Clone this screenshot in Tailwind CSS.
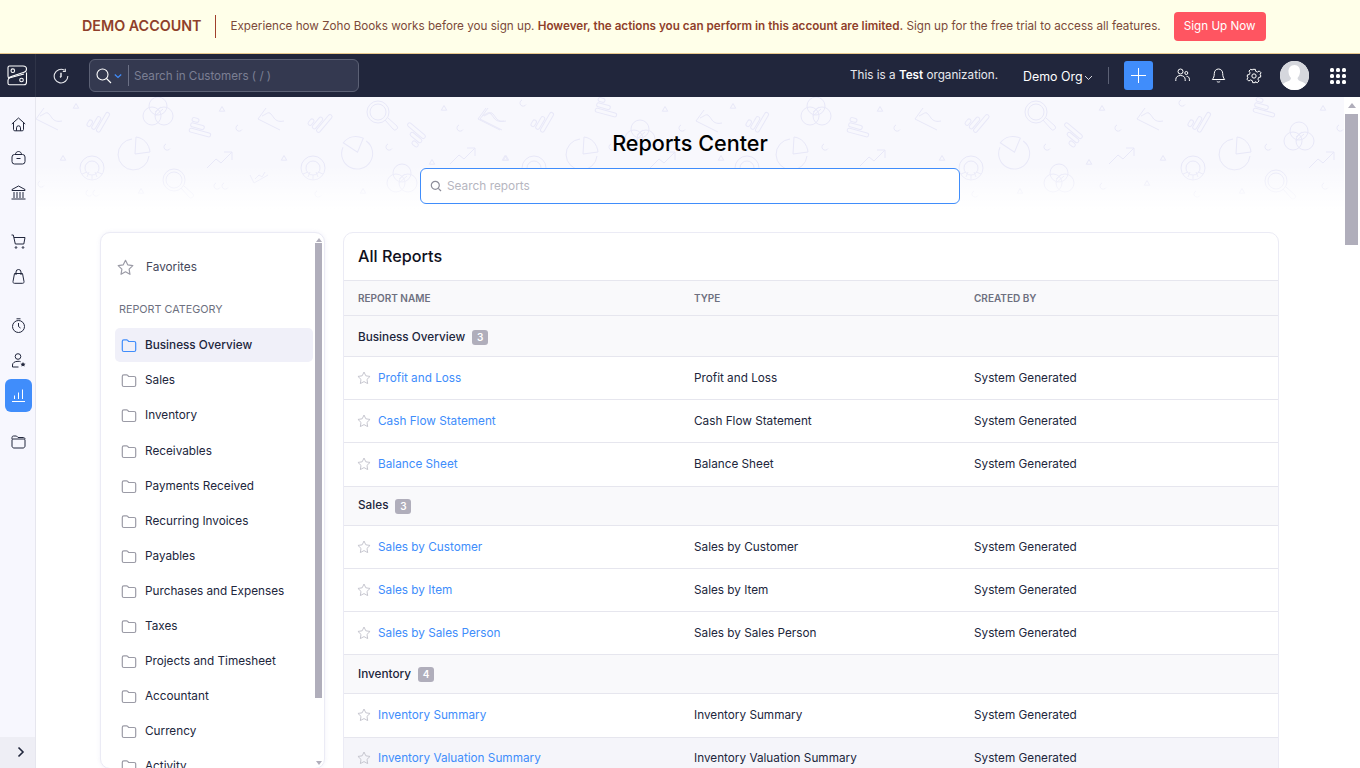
<!DOCTYPE html>
<html>
<head>
<meta charset="utf-8">
<script src="https://cdn.jsdelivr.net/npm/@tailwindcss/browser@4"></script>
</head>
<body class="h-[768px] w-[1360px] overflow-hidden bg-white font-['Inter',sans-serif] text-[11.75px] text-[#21263c]">
<svg class="hidden">
<defs>
<symbol id="star" viewBox="0 0 16 16"><path d="M8 1.200l2.100 4.300 4.800.7-3.500 3.400.8 4.800L8 12.100l-4.200 2.300.8-4.800L1.100 6.200l4.800-.7z" fill="none" stroke="currentColor" stroke-width="1.100" stroke-linejoin="round"/></symbol>
<symbol id="folder" viewBox="0 0 16 16"><path d="M1.300 3.400c0-.9.700-1.500 1.500-1.500h2.900c.4 0 .7.200 1 .5l.9 1.100h5.600c.9 0 1.500.7 1.500 1.500v7c0 .9-.6 1.500-1.500 1.500H2.800c-.8 0-1.500-.6-1.500-1.500z" fill="none" stroke="currentColor" stroke-width="1.200"/></symbol>
<g id="p-line"><path d="M-5-11L-13 0 9 11"/><path d="M-9-3c5-2 6-5 9-2 3 3 4 9 13 7"/></g>
<g id="p-bars"><rect x="-2" y="-13" width="4" height="22" rx="2" transform="rotate(30)"/><rect x="-7.500" y="-5" width="4" height="14" rx="2" transform="rotate(30)"/><rect x="-13" y="2" width="4" height="7" rx="2" transform="rotate(30)"/></g>
<g id="p-venn"><circle cy="-6" r="9"/><circle cx="-6" cy="4" r="9"/><circle cx="6" cy="4" r="9"/><path d="M-3 0l6-5M-3 4l8-7"/></g>
<g id="p-pie"><path d="M-2-15a15.500 15.500 0 1 0 17 17"/><path d="M2-17c8 1 13 7 14 15L1 0z"/></g>
<g id="p-donut"><circle r="12"/><circle r="7"/><path d="M-5 9l2-5M5 9l-2-5M0 12V7M-10 6l5-2M10 6l-5-2"/></g>
<g id="p-mag"><circle r="11"/><circle r="8"/><path d="M7 8l8 9a2.500 2.500 0 0 0 4-3l-9-8"/></g>
<g id="p-arrow"><path d="M-13 6l9-9 5 4 11-11M4-10h8v8"/></g>
<g id="p-tri"><path d="M0-2.500L2.700 2.200H-2.700z"/></g>
<g id="p-c"><path d="M-1-3a3.200 3.200 0 1 0 4 4.500"/></g>
<g id="p-mini"><path d="M-9-2l4 8 14-8M-4 2l4-4 3 2 3-5"/></g>
</defs>
</svg>

<!-- Demo banner -->
<div class="flex h-[54px] items-center border-b border-[#e9c98f] bg-[#ffffe9] pl-[82px]">
  <span class="text-[14.300px] font-semibold leading-none text-[#8f3f2b]">DEMO ACCOUNT</span>
  <span class="mx-[14px] h-[23px] w-px bg-[#a0402c]"></span>
  <p class="whitespace-nowrap text-[11.680px] text-[#7c4a3a]">Experience how Zoho Books works before you sign up. <b class="font-semibold text-[#8f3f2b]">However, the actions you can perform in this account are limited.</b> Sign up for the free trial to access all features.</p>
  <button class="ml-[13px] flex h-[29px] w-[92px] items-center justify-center rounded-[4px] bg-[#ff5561] text-[11.650px] text-white">Sign Up Now</button>
</div>

<!-- Top bar -->
<header class="flex h-[43px] items-center bg-[#21263c] text-white">
  <div class="flex h-full w-[36px] items-center justify-center border-r border-[#2f3448]">
    <svg class="h-[23px] w-[23px]" viewBox="0 0 23 23" fill="none" stroke="#fff" stroke-width="1.100"><path d="M2 3.500C2 2.500 2.600 2 3.500 2H17c2 0 3.500 1 3.500 3s-1 2.800-2.500 3.300L6 12.300c-1.500.5-3 1.200-3.200 1.800C2.300 13.800 2 13 2 12z"/><path d="M20.500 8.500V18c0 1.700-1 2.800-2.500 2.800H3.500c-1 0-1.500-.6-1.500-1.500v-3c0-1.200.6-2 2-2.500L18 10"/><circle cx="6.800" cy="6.700" r="1.800"/><circle cx="15.500" cy="16" r="1.800"/></svg>
  </div>
  <div class="flex w-[49px] justify-center">
    <svg class="h-[16px] w-[16px]" viewBox="0 0 16 16" fill="none" stroke="#e8e9ee" stroke-width="1.100"><path d="M11.500 2.300A6.800 6.800 0 1 0 14.800 8"/><path d="M12.300.8v2.700H9.800" /><path d="M8 4.800V8.500l-1 .8" stroke-width="1.500"/></svg>
  </div>
  <div class="ml-[4px] flex h-[33px] w-[270px] items-center rounded-[6px] border border-[#5c6175] bg-[#343950]">
    <svg class="ml-[6px] h-[16px] w-[16px]" viewBox="0 0 16 16" fill="none" stroke="#fff" stroke-width="1.100"><circle cx="6.500" cy="6.500" r="5.500"/><path d="M10.500 10.500L15 15"/></svg>
    <svg class="ml-[2px] h-[8px] w-[8px]" viewBox="0 0 8 8" fill="none" stroke="#408dfb" stroke-width="1.200"><path d="M.8 2.500L4 5.500l3.200-3"/></svg>
    <span class="ml-[6px] h-[21px] w-px bg-[#6b7085]"></span>
    <span class="ml-[5px] pt-[3px] text-[11.650px] text-[#7b7f93]">Search in Customers ( / )</span>
  </div>
  <div class="ml-[491px] whitespace-nowrap text-[11.700px] text-[#e8e9ee]">This is a <b class="font-semibold text-white">Test</b> organization.</div>
  <div class="ml-[25px] flex items-center whitespace-nowrap pt-[4px] text-[12.400px] text-white">Demo Org<svg class="ml-[1px] h-[9px] w-[9px]" viewBox="0 0 9 9" fill="none" stroke="#d8d9e0" stroke-width="1"><path d="M1 3l3.500 3.500L8 3"/></svg></div>
  <span class="ml-[15px] h-[17px] w-px bg-[#5c6175]"></span>
  <button class="ml-[15px] flex h-[29px] w-[29px] items-center justify-center rounded-[3px] bg-[#408dfb]">
    <svg class="h-[15px] w-[15px]" viewBox="0 0 15 15" stroke="#fff" stroke-width="1"><path d="M7.500 0v15M0 7.500h15"/></svg>
  </button>
  <svg class="ml-[22px] h-[15px] w-[15px]" viewBox="0 0 15 15" fill="none" stroke="#fff" stroke-width="1"><circle cx="5.500" cy="3.500" r="2.500"/><path d="M.8 13v-1.500c0-2.500 2-4 4.700-4s4.700 1.500 4.700 4V13"/><circle cx="11.300" cy="5" r="1.500"/><path d="M11.500 8.300c1.800 0 2.900 1.200 2.900 3V13"/></svg>
  <svg class="ml-[21px] h-[15px] w-[15px]" viewBox="0 0 15 15" fill="none" stroke="#fff" stroke-width="1"><path d="M7.500 1C5 1 3.300 3 3.300 5.500c0 3-.8 4.500-2 6h12.400c-1.200-1.500-2-3-2-6C11.700 3 10 1 7.500 1zM5.800 13.300c.7 1 2.700 1 3.400 0"/></svg>
  <svg class="ml-[20px] h-[16px] w-[16px]" viewBox="0 0 24 24" fill="none" stroke="#fff" stroke-width="1.500"><circle cx="12" cy="12" r="3.200"/><path d="M10 2h4l.6 3 2.600 1.100 2.600-1.700 2.800 2.800-1.700 2.600L22 10.400v3.200l-3 .6-1.100 2.600 1.700 2.600-2.800 2.800-2.600-1.700-.1 0L14 22h-4l-.6-3-2.600-1.100-2.600 1.700-2.800-2.800 1.700-2.600L2 13.600v-3.200l3-.6 1.100-2.600-1.700-2.600 2.800-2.800 2.200 1.400z"/></svg>
  <div class="ml-[18px] h-[29px] w-[29px] overflow-hidden rounded-full bg-white">
    <svg viewBox="0 0 29 29" class="h-full w-full"><rect width="29" height="29" fill="#d5d7dd"/><path d="M14.500 4c3.800 0 5.800 3 5.500 7-.2 3-1.500 5-2.500 6 0 2 2 3 5 4 2 .8 3.500 2 4 4l-3 4H5l-3-4c.5-2 2-3.200 4-4 3-1 5-2 5-4-1-1-2.300-3-2.500-6C8.200 7 10.700 4 14.500 4z" fill="#fff"/></svg>
  </div>
  <div class="ml-[21px] grid grid-cols-3 gap-[2px]">
    <i class="h-[4px] w-[4px] rounded-[1.500px] bg-white"></i><i class="h-[4px] w-[4px] rounded-[1.500px] bg-white"></i><i class="h-[4px] w-[4px] rounded-[1.500px] bg-white"></i>
    <i class="h-[4px] w-[4px] rounded-[1.500px] bg-white"></i><i class="h-[4px] w-[4px] rounded-[1.500px] bg-white"></i><i class="h-[4px] w-[4px] rounded-[1.500px] bg-white"></i>
    <i class="h-[4px] w-[4px] rounded-[1.500px] bg-white"></i><i class="h-[4px] w-[4px] rounded-[1.500px] bg-white"></i><i class="h-[4px] w-[4px] rounded-[1.500px] bg-white"></i>
  </div>
</header>

<div class="flex h-[671px]">
  <!-- Icon rail -->
  <aside class="flex h-full w-[36px] flex-col items-center border-r border-[#e6e6ee] bg-[#f7f7fe]">
    <div class="flex flex-1 flex-col items-center pl-[2px]">
      <svg class="mt-[20px] h-[15px] w-[15px]" viewBox="0 0 15 15" fill="none" stroke="#21263c" stroke-width="1"><path d="M.8 7L7.500 1l6.700 6M2.500 6v6.500c0 .8.500 1.300 1.300 1.300h7.400c.8 0 1.300-.5 1.300-1.300V6M5.500 13.800v-3a2 2 0 0 1 4 0v3"/></svg>
      <svg class="mt-[18px] h-[15px] w-[15px]" viewBox="0 0 15 15" fill="none" stroke="#21263c" stroke-width="1"><rect x="1" y="4.500" width="13" height="9.500" rx="2.500"/><path d="M4.500 4.500c0-4 6-4 6 0M5.500 8.500h4"/></svg>
      <svg class="mt-[20px] h-[15px] w-[15px]" viewBox="0 0 15 15" fill="none" stroke="#21263c" stroke-width="1"><path d="M1 4.500L7.500 1 14 4.500v1H1zM3 7v6M6 7v6M9 7v6M12 7v6M.5 14h14"/></svg>
      <svg class="mt-[34px] h-[15px] w-[15px]" viewBox="0 0 15 15" fill="none" stroke="#21263c" stroke-width="1"><path d="M.5 1h1.800l2 9h8.500l1.200-6.500H3"/><circle cx="5" cy="13.500" r=".8"/><circle cx="12" cy="13.500" r=".8"/></svg>
      <svg class="mt-[20px] h-[15px] w-[15px]" viewBox="0 0 15 15" fill="none" stroke="#21263c" stroke-width="1"><path d="M3.500 4.500h8l1.500 8c.2 1-.4 1.800-1.400 1.800H3.400c-1 0-1.600-.8-1.400-1.800zM5 6V3a2.500 2.500 0 0 1 5 0v3"/></svg>
      <svg class="mt-[34px] h-[15px] w-[15px]" viewBox="0 0 15 15" fill="none" stroke="#21263c" stroke-width="1"><circle cx="7.500" cy="8.500" r="6"/><path d="M5.500.8h4M7.500 5v3.500l2 1.500" /></svg>
      <svg class="mt-[20px] h-[15px] w-[15px]" viewBox="0 0 15 15" fill="none" stroke="#21263c" stroke-width="1"><circle cx="7" cy="3.500" r="2.800"/><path d="M1.500 14v-2c0-2 2-3.700 5.500-3.700 1 0 2 .1 2.600.4M1.500 14h6"/><path d="M12 9l.8 1.500 1.700.2-1.200 1.200.3 1.700-1.600-.8-1.600.8.300-1.700-1.200-1.200 1.700-.2z" fill="#21263c" stroke="none"/></svg>
      <div class="mt-[11px] flex h-[33px] w-[27px] items-center justify-center rounded-[6px] bg-[#408dfb]">
        <svg class="h-[15px] w-[15px]" viewBox="0 0 15 15" fill="none" stroke="#fff" stroke-width="1"><path d="M1 13.500h13M3.500 11V7.500M7.500 11V4.500M11.500 11V1.500"/></svg>
      </div>
      <svg class="mt-[22px] h-[15px] w-[15px]" viewBox="0 0 15 15" fill="none" stroke="#21263c" stroke-width="1"><path d="M1 5V3.500c0-.8.600-1.500 1.500-1.500h3l1.500 1.500h5.500c.8 0 1.500.7 1.500 1.500M1 6c0-.6.500-1 1-1h11c.6 0 1 .4 1 1v6c0 1-.8 2-2 2H3c-1.200 0-2-1-2-2z"/></svg>
    </div>
    <div class="flex h-[31px] w-full items-center justify-center bg-[#eeeef5] pb-[2px] pl-[6px]">
      <svg class="h-[12px] w-[12px]" viewBox="0 0 12 12" fill="none" stroke="#21263c" stroke-width="1.600"><path d="M3.500 1.500L8 6l-4.500 4.500"/></svg>
    </div>
  </aside>

  <!-- Main -->
  <main class="relative flex h-full flex-1 flex-col overflow-hidden">
    <div class="absolute inset-x-0 top-0 h-[112px] bg-[#f8f8fd]">
      <svg class="absolute left-0 top-0 h-[112px] w-[1308px]" viewBox="0 0 1308 112" fill="none" stroke="#e8e8f8" stroke-width="1">
        <use href="#p-line" x="13" y="22"/><use href="#p-tri" x="40" y="9"/><use href="#p-bars" x="66" y="27"/><use href="#p-venn" x="122" y="15"/><use href="#p-bars" transform="translate(162 35) rotate(75)"/><use href="#p-tri" x="186" y="12"/><use href="#p-c" x="203" y="31"/><use href="#p-line" x="235" y="22"/><use href="#p-bars" transform="translate(287 28) rotate(10)"/><use href="#p-mag" x="342" y="15"/><use href="#p-bars" transform="translate(382 35) rotate(-80)"/><use href="#p-tri" x="408" y="11"/><use href="#p-c" x="424" y="31"/><use href="#p-line" x="455" y="22"/>
        <use href="#p-pie" x="98" y="57"/><use href="#p-c" x="131" y="50"/><use href="#p-tri" x="27" y="61"/><use href="#p-donut" x="56" y="71"/><use href="#p-c" x="5" y="87"/><use href="#p-arrow" x="184" y="65"/><use href="#p-tri" x="248" y="61"/><use href="#p-donut" x="277" y="71"/><use href="#p-pie" transform="translate(321 56) rotate(-60)"/><use href="#p-c" x="353" y="50"/><use href="#p-mag" x="138" y="83"/><use href="#p-mini" x="223" y="80"/><use href="#p-c" x="53" y="96"/><use href="#p-c" x="60" y="96"/><use href="#p-c" x="181" y="89"/><use href="#p-c" x="189" y="89"/><use href="#p-tri" x="105" y="94"/><use href="#p-c" x="282" y="97"/><use href="#p-venn" x="366" y="82"/><use href="#p-tri" x="327" y="94"/><use href="#p-tri" x="396" y="65"/><use href="#p-arrow" x="427" y="61"/><use href="#p-tri" x="469" y="61"/>
        <use href="#p-line" x="457" y="22"/><use href="#p-c" x="487" y="6"/><use href="#p-bars" x="510" y="27"/><use href="#p-bars" transform="translate(568 15) rotate(75)"/><use href="#p-venn" x="604" y="38"/><use href="#p-tri" x="629" y="12"/><use href="#p-c" x="646" y="31"/><use href="#p-line" x="673" y="24"/><use href="#p-tri" x="697" y="9"/><use href="#p-bars" x="725" y="27"/><use href="#p-venn" x="780" y="15"/><use href="#p-bars" transform="translate(820 35) rotate(75)"/><use href="#p-tri" x="844" y="12"/>
        <use href="#p-pie" x="546" y="57"/><use href="#p-c" x="576" y="50"/><use href="#p-tri" x="470" y="61"/><use href="#p-donut" x="498" y="71"/><use href="#p-arrow" x="627" y="65"/><use href="#p-tri" x="685" y="61"/><use href="#p-donut" x="711" y="71"/><use href="#p-pie" x="756" y="57"/><use href="#p-c" x="789" y="50"/><use href="#p-arrow" x="837" y="63"/>
        <use href="#p-line" x="892" y="22"/><use href="#p-bars" transform="translate(944 28) rotate(10)"/><use href="#p-mag" x="1000" y="15"/><use href="#p-bars" transform="translate(1039 35) rotate(-80)"/><use href="#p-tri" x="1066" y="11"/><use href="#p-c" x="1082" y="31"/><use href="#p-line" x="1114" y="22"/><use href="#p-c" x="1146" y="6"/><use href="#p-bars" x="1167" y="27"/><use href="#p-bars" transform="translate(1226 15) rotate(75)"/><use href="#p-venn" x="1263" y="40"/><use href="#p-tri" x="1287" y="11"/><use href="#p-c" x="1304" y="31"/><use href="#p-c" x="861" y="31"/>
        <use href="#p-pie" transform="translate(978 56) rotate(-60)"/><use href="#p-c" x="1011" y="50"/><use href="#p-pie" x="1199" y="57"/><use href="#p-c" x="1232" y="50"/><use href="#p-tri" x="906" y="61"/><use href="#p-donut" x="935" y="71"/><use href="#p-tri" x="1053" y="65"/><use href="#p-arrow" x="1086" y="61"/><use href="#p-tri" x="1127" y="61"/><use href="#p-donut" x="1157" y="71"/><use href="#p-arrow" x="1286" y="65"/><use href="#p-venn" x="1023" y="82"/><use href="#p-mag" x="1240" y="84"/><use href="#p-tri" x="1111" y="86"/><use href="#p-tri" x="984" y="94"/><use href="#p-tri" x="1206" y="94"/><use href="#p-c" x="939" y="97"/><use href="#p-c" x="1067" y="89"/><use href="#p-c" x="1161" y="97"/><use href="#p-c" x="1289" y="89"/>
      </svg>
      <div class="absolute inset-x-0 bottom-0 h-[44px] bg-gradient-to-b from-white/0 to-white"></div>
    </div>

    <div class="relative flex h-full w-[1308px] flex-col items-center">
      <h1 class="mt-[31px] text-[21.600px] font-medium leading-[30px] text-[#000]">Reports Center</h1>
      <div class="mt-[10px] flex h-[36px] w-[540px] shrink-0 items-center rounded-[6px] border border-[#408dfb] bg-white pl-[9px] text-[11.850px] text-[#b6b6bf]">
        <svg class="h-[12px] w-[12px]" viewBox="0 0 12 12" fill="none" stroke="#8d8d99" stroke-width="1.200"><circle cx="5.300" cy="5.300" r="4"/><path d="M8.300 8.300L11 11"/></svg>
        <span class="ml-[5px] pt-[2px]">Search reports</span>
      </div>

      <div class="ml-[64px] mt-[28px] flex w-[1179px] items-start gap-[18px] self-start">
        <!-- Category list -->
        <section class="relative h-[537px] w-[225px] shrink-0 overflow-hidden rounded-[10px] border border-[#ebebf5] bg-white shadow-[0_0_4px_rgba(220,220,240,0.4)]">
          <div class="flex h-[68px] items-center pl-[16px] pt-[2px]">
            <svg class="mb-[2px] h-[17px] w-[17px] text-[#9b9ba6]" viewBox="0 0 16 16"><use href="#star"/></svg>
            <span class="ml-[12px] text-[11.800px] text-[#44475a]">Favorites</span>
          </div>
          <div class="flex h-[19px] items-center pl-[18px] text-[10.800px] text-[#6e7080]">REPORT CATEGORY</div>
          <ul class="mt-[8px] w-[212px] pl-[14px]">
            <li class="flex h-[34px] w-[198px] items-center rounded-[5px] bg-[#f0f0f9] pl-[6px] pt-[1px] font-medium text-[#21263c]"><svg class="h-[16px] w-[16px] text-[#408dfb]" viewBox="0 0 16 16"><use href="#folder"/></svg><span class="ml-[8px]">Business Overview</span></li>
            <li class="mt-px flex h-[35px] items-center pl-[6px]"><svg class="h-[16px] w-[16px] text-[#9b9ba6]" viewBox="0 0 16 16"><use href="#folder"/></svg><span class="ml-[8px]">Sales</span></li>
            <li class="flex h-[35px] items-center pl-[6px]"><svg class="h-[16px] w-[16px] text-[#9b9ba6]" viewBox="0 0 16 16"><use href="#folder"/></svg><span class="ml-[8px]">Inventory</span></li>
            <li class="mt-px flex h-[35px] items-center pl-[6px]"><svg class="h-[16px] w-[16px] text-[#9b9ba6]" viewBox="0 0 16 16"><use href="#folder"/></svg><span class="ml-[8px]">Receivables</span></li>
            <li class="flex h-[35px] items-center pl-[6px]"><svg class="h-[16px] w-[16px] text-[#9b9ba6]" viewBox="0 0 16 16"><use href="#folder"/></svg><span class="ml-[8px]">Payments Received</span></li>
            <li class="flex h-[35px] items-center pl-[6px]"><svg class="h-[16px] w-[16px] text-[#9b9ba6]" viewBox="0 0 16 16"><use href="#folder"/></svg><span class="ml-[8px]">Recurring Invoices</span></li>
            <li class="flex h-[35px] items-center pl-[6px]"><svg class="h-[16px] w-[16px] text-[#9b9ba6]" viewBox="0 0 16 16"><use href="#folder"/></svg><span class="ml-[8px]">Payables</span></li>
            <li class="flex h-[35px] items-center pl-[6px]"><svg class="h-[16px] w-[16px] text-[#9b9ba6]" viewBox="0 0 16 16"><use href="#folder"/></svg><span class="ml-[8px]">Purchases and Expenses</span></li>
            <li class="flex h-[35px] items-center pl-[6px]"><svg class="h-[16px] w-[16px] text-[#9b9ba6]" viewBox="0 0 16 16"><use href="#folder"/></svg><span class="ml-[8px]">Taxes</span></li>
            <li class="flex h-[35px] items-center pl-[6px]"><svg class="h-[16px] w-[16px] text-[#9b9ba6]" viewBox="0 0 16 16"><use href="#folder"/></svg><span class="ml-[8px]">Projects and Timesheet</span></li>
            <li class="flex h-[35px] items-center pl-[6px]"><svg class="h-[16px] w-[16px] text-[#9b9ba6]" viewBox="0 0 16 16"><use href="#folder"/></svg><span class="ml-[8px]">Accountant</span></li>
            <li class="flex h-[35px] items-center pl-[6px]"><svg class="h-[16px] w-[16px] text-[#9b9ba6]" viewBox="0 0 16 16"><use href="#folder"/></svg><span class="ml-[8px]">Currency</span></li>
            <li class="flex h-[35px] items-center pl-[6px]"><svg class="h-[16px] w-[16px] text-[#9b9ba6]" viewBox="0 0 16 16"><use href="#folder"/></svg><span class="ml-[8px]">Activity</span></li>
          </ul>
          <div class="absolute right-[2px] top-0 flex h-full w-[7px] flex-col items-center">
            <i class="mt-[5px] h-0 w-0 border-x-[3px] border-b-[4px] border-x-transparent border-b-[#b0aebb]"></i>
            <i class="mt-[1px] h-[455px] w-[7px] bg-[#b0aebb]"></i>
            <i class="mb-[3px] mt-auto h-0 w-0 border-x-[3px] border-t-[4px] border-x-transparent border-t-[#b0aebb]"></i>
          </div>
        </section>

        <!-- Table -->
        <section class="w-[936px] shrink-0 overflow-hidden rounded-t-[10px] border border-[#ebebf5] bg-white">
          <div class="flex h-[48px] items-center border-b border-[#e6e6ee] pl-[14px] text-[16.200px] font-medium text-[#0f1020]">All Reports</div>
          <div class="grid h-[35px] grid-cols-[336px_280px_1fr] items-center border-b border-[#e6e6ee] bg-[#f9f9fb] pl-[14px] text-[10px] font-semibold text-[#6e7080]">
            <span>REPORT NAME</span><span>TYPE</span><span>CREATED BY</span>
          </div>

          <div class="flex h-[41px] items-center gap-[7px] border-b border-[#e6e6ee] bg-[#f9f9fb] pl-[14px] pt-[3px] font-medium text-[#21263c]">Business Overview <span class="flex h-[15px] w-[16px] items-center justify-center rounded-[3px] bg-[#b0aebb] text-[10px] font-semibold text-white">3</span></div>
          <div class="grid h-[43px] grid-cols-[336px_280px_1fr] items-center border-b border-[#e6e6ee] pl-[14px] pt-[1px]"><span class="flex items-center"><svg class="mb-[2px] ml-[-1px] h-[14px] w-[14px] text-[#c4c4cd]" viewBox="0 0 16 16"><use href="#star"/></svg><a class="ml-[7px] text-[#408dfb]">Profit and Loss</a></span><span>Profit and Loss</span><span>System Generated</span></div>
          <div class="grid h-[43px] grid-cols-[336px_280px_1fr] items-center border-b border-[#e6e6ee] pl-[14px] pt-[1px]"><span class="flex items-center"><svg class="mb-[2px] ml-[-1px] h-[14px] w-[14px] text-[#c4c4cd]" viewBox="0 0 16 16"><use href="#star"/></svg><a class="ml-[7px] text-[#408dfb]">Cash Flow Statement</a></span><span>Cash Flow Statement</span><span>System Generated</span></div>
          <div class="grid h-[44px] grid-cols-[336px_280px_1fr] items-center border-b border-[#e6e6ee] pl-[14px] pt-[1px]"><span class="flex items-center"><svg class="mb-[2px] ml-[-1px] h-[14px] w-[14px] text-[#c4c4cd]" viewBox="0 0 16 16"><use href="#star"/></svg><a class="ml-[7px] text-[#408dfb]">Balance Sheet</a></span><span>Balance Sheet</span><span>System Generated</span></div>

          <div class="flex h-[39px] items-center gap-[7px] border-b border-[#e6e6ee] bg-[#f9f9fb] pl-[14px] font-medium text-[#21263c]">Sales <span class="flex h-[15px] w-[16px] items-center justify-center rounded-[3px] bg-[#b0aebb] text-[10px] font-semibold text-white">3</span></div>
          <div class="grid h-[43px] grid-cols-[336px_280px_1fr] items-center border-b border-[#e6e6ee] pl-[14px] pt-[1px]"><span class="flex items-center"><svg class="mb-[2px] ml-[-1px] h-[14px] w-[14px] text-[#c4c4cd]" viewBox="0 0 16 16"><use href="#star"/></svg><a class="ml-[7px] text-[#408dfb]">Sales by Customer</a></span><span>Sales by Customer</span><span>System Generated</span></div>
          <div class="grid h-[43px] grid-cols-[336px_280px_1fr] items-center border-b border-[#e6e6ee] pl-[14px] pt-[1px]"><span class="flex items-center"><svg class="mb-[2px] ml-[-1px] h-[14px] w-[14px] text-[#c4c4cd]" viewBox="0 0 16 16"><use href="#star"/></svg><a class="ml-[7px] text-[#408dfb]">Sales by Item</a></span><span>Sales by Item</span><span>System Generated</span></div>
          <div class="grid h-[43px] grid-cols-[336px_280px_1fr] items-center border-b border-[#e6e6ee] pl-[14px] pt-[1px]"><span class="flex items-center"><svg class="mb-[2px] ml-[-1px] h-[14px] w-[14px] text-[#c4c4cd]" viewBox="0 0 16 16"><use href="#star"/></svg><a class="ml-[7px] text-[#408dfb]">Sales by Sales Person</a></span><span>Sales by Sales Person</span><span>System Generated</span></div>

          <div class="flex h-[39px] items-center gap-[7px] border-b border-[#e6e6ee] bg-[#f9f9fb] pl-[14px] pt-[1px] font-medium text-[#21263c]">Inventory <span class="flex h-[15px] w-[16px] items-center justify-center rounded-[3px] bg-[#b0aebb] text-[10px] font-semibold text-white">4</span></div>
          <div class="grid h-[44px] grid-cols-[336px_280px_1fr] items-center border-b border-[#e6e6ee] pl-[14px]"><span class="flex items-center"><svg class="mb-[2px] ml-[-1px] h-[14px] w-[14px] text-[#c4c4cd]" viewBox="0 0 16 16"><use href="#star"/></svg><a class="ml-[7px] text-[#408dfb]">Inventory Summary</a></span><span>Inventory Summary</span><span>System Generated</span></div>
          <div class="grid h-[43px] grid-cols-[336px_280px_1fr] items-center border-b border-[#e6e6ee] bg-[#f5f5fa] pl-[14px]"><span class="flex items-center"><svg class="mb-[2px] ml-[-1px] h-[14px] w-[14px] text-[#c4c4cd]" viewBox="0 0 16 16"><use href="#star"/></svg><a class="ml-[7px] text-[#408dfb]">Inventory Valuation Summary</a></span><span>Inventory Valuation Summary</span><span>System Generated</span></div>
        </section>
      </div>
    </div>

    <!-- Page scrollbar -->
    <div class="absolute right-0 top-0 flex h-full w-[16px] flex-col items-center bg-white">
      <i class="mt-[6px] h-0 w-0 border-x-[4px] border-b-[5px] border-x-transparent border-b-[#b0aebb]"></i>
      <i class="ml-[-1px] mt-[6px] h-[131px] w-[13px] bg-[#b0aebb]"></i>
    </div>
  </main>
</div>
</body>
</html>
